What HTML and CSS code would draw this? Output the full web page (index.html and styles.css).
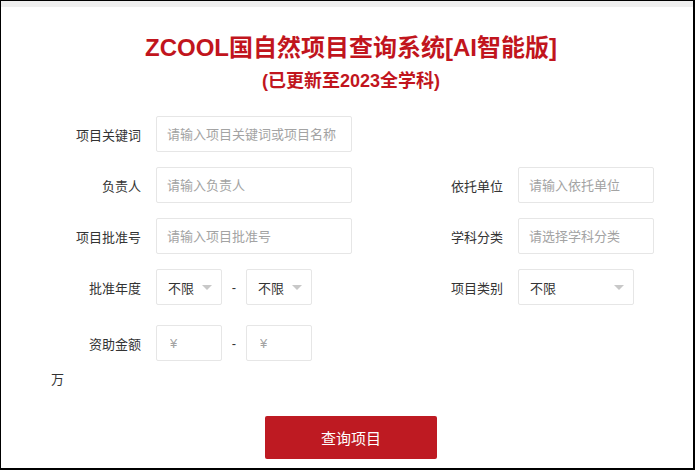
FILE: index.html
```html
<!DOCTYPE html>
<html lang="zh-CN">
<head>
  <meta charset="UTF-8">
  <meta name="viewport" content="width=device-width, initial-scale=1.0">
  <title>ZCOOL国自然项目查询系统</title>
  <link rel="stylesheet" href="styles.css">
</head>
<body>
  <div class="frame">
    <div class="topbar"></div>

    <h1 class="title">ZCOOL国自然项目查询系统[AI智能版]</h1>
    <p class="subtitle">(已更新至2023全学科)</p>

    <form class="search" onsubmit="return false;">
      <div class="row">
        <div class="field">
          <label>项目关键词</label>
          <input class="box wide" type="text" placeholder="请输入项目关键词或项目名称">
        </div>
      </div>

      <div class="row">
        <div class="field">
          <label>负责人</label>
          <input class="box wide" type="text" placeholder="请输入负责人">
        </div>
        <div class="field">
          <label>依托单位</label>
          <input class="box mid" type="text" placeholder="请输入依托单位">
        </div>
      </div>

      <div class="row">
        <div class="field">
          <label>项目批准号</label>
          <input class="box wide" type="text" placeholder="请输入项目批准号">
        </div>
        <div class="field">
          <label>学科分类</label>
          <input class="box mid" type="text" placeholder="请选择学科分类">
        </div>
      </div>

      <div class="row">
        <div class="field">
          <label>批准年度</label>
          <div class="box small select"><span>不限</span><i class="caret"></i></div>
          <span class="dash">-</span>
          <div class="box small select"><span>不限</span><i class="caret"></i></div>
        </div>
        <div class="field">
          <label>项目类别</label>
          <div class="box cat select"><span>不限</span><i class="caret"></i></div>
        </div>
      </div>

      <div class="row money">
        <div class="field">
          <label>资助金额</label>
          <input class="box small yen" type="text" placeholder="¥">
          <span class="dash">-</span>
          <input class="box small yen" type="text" placeholder="¥">
        </div>
      </div>
      <div class="unit">万</div>

      <div class="actions">
        <button class="btn" type="submit">查询项目</button>
      </div>
    </form>
  </div>
</body>
</html>
```

FILE: styles.css
```css
body {
  margin: 0;
  font-family: "Liberation Sans", "Noto Sans CJK SC", sans-serif;
  background: #fff;
  color: #333;
}
.frame {
  width: 692px;
  height: 467px;
  border: 1px solid #000;
  border-bottom-width: 2px;
  border-right-width: 2px;
  overflow: hidden;
}
.topbar {
  height: 6px;
  background: #efefef;
}
.title {
  margin: 26px 0 0;
  padding-left: 8px;
  text-align: center;
  font-size: 24px;
  line-height: 30px;
  font-weight: bold;
  color: #c1151d;
}
.subtitle {
  margin: 6px 0 0;
  padding-left: 8px;
  text-align: center;
  font-size: 18px;
  line-height: 24px;
  font-weight: bold;
  color: #c1151d;
}
.search {
  margin-top: 23px;
  padding-left: 50px;
}
.row {
  display: flex;
  height: 36px;
  margin-bottom: 15px;
}
.row.money {
  margin-top: 20px;
  margin-bottom: 0;
}
.field {
  display: flex;
  flex: none;
  align-items: center;
  width: 362px;
}
.field + .field {
  width: auto;
}
.field label {
  width: 90px;
  margin-right: 15px;
  text-align: right;
  font-size: 13px;
  color: #333;
}
.box {
  box-sizing: border-box;
  height: 36px;
  border: 1px solid #e6e6e6;
  border-radius: 2px;
  background: #fff;
  font-family: inherit;
  font-size: 13px;
  color: #333;
  padding: 0 10px;
  outline: none;
}
.box::placeholder {
  color: #a3a3a3;
}
.wide { width: 196px; }
.mid { width: 136px; }
.small { width: 66px; }
.cat { width: 116px; }
.yen { padding-left: 13px; }
.select {
  display: flex;
  align-items: center;
  justify-content: space-between;
  padding: 0 9px 0 11px;
}
.caret {
  width: 0;
  height: 0;
  border-left: 5px solid transparent;
  border-right: 5px solid transparent;
  border-top: 5px solid #c8c8c8;
}
.dash {
  width: 24px;
  text-align: center;
  font-size: 13px;
  color: #333;
}
.unit {
  margin-top: 9px;
  font-size: 13px;
  line-height: 20px;
  color: #333;
}
.actions {
  margin-top: 26px;
  padding-left: 214px;
}
.btn {
  width: 172px;
  height: 43px;
  border: none;
  border-radius: 2px;
  background: #be1a22;
  color: #fff;
  font-family: inherit;
  font-size: 15px;
  cursor: pointer;
}
```
